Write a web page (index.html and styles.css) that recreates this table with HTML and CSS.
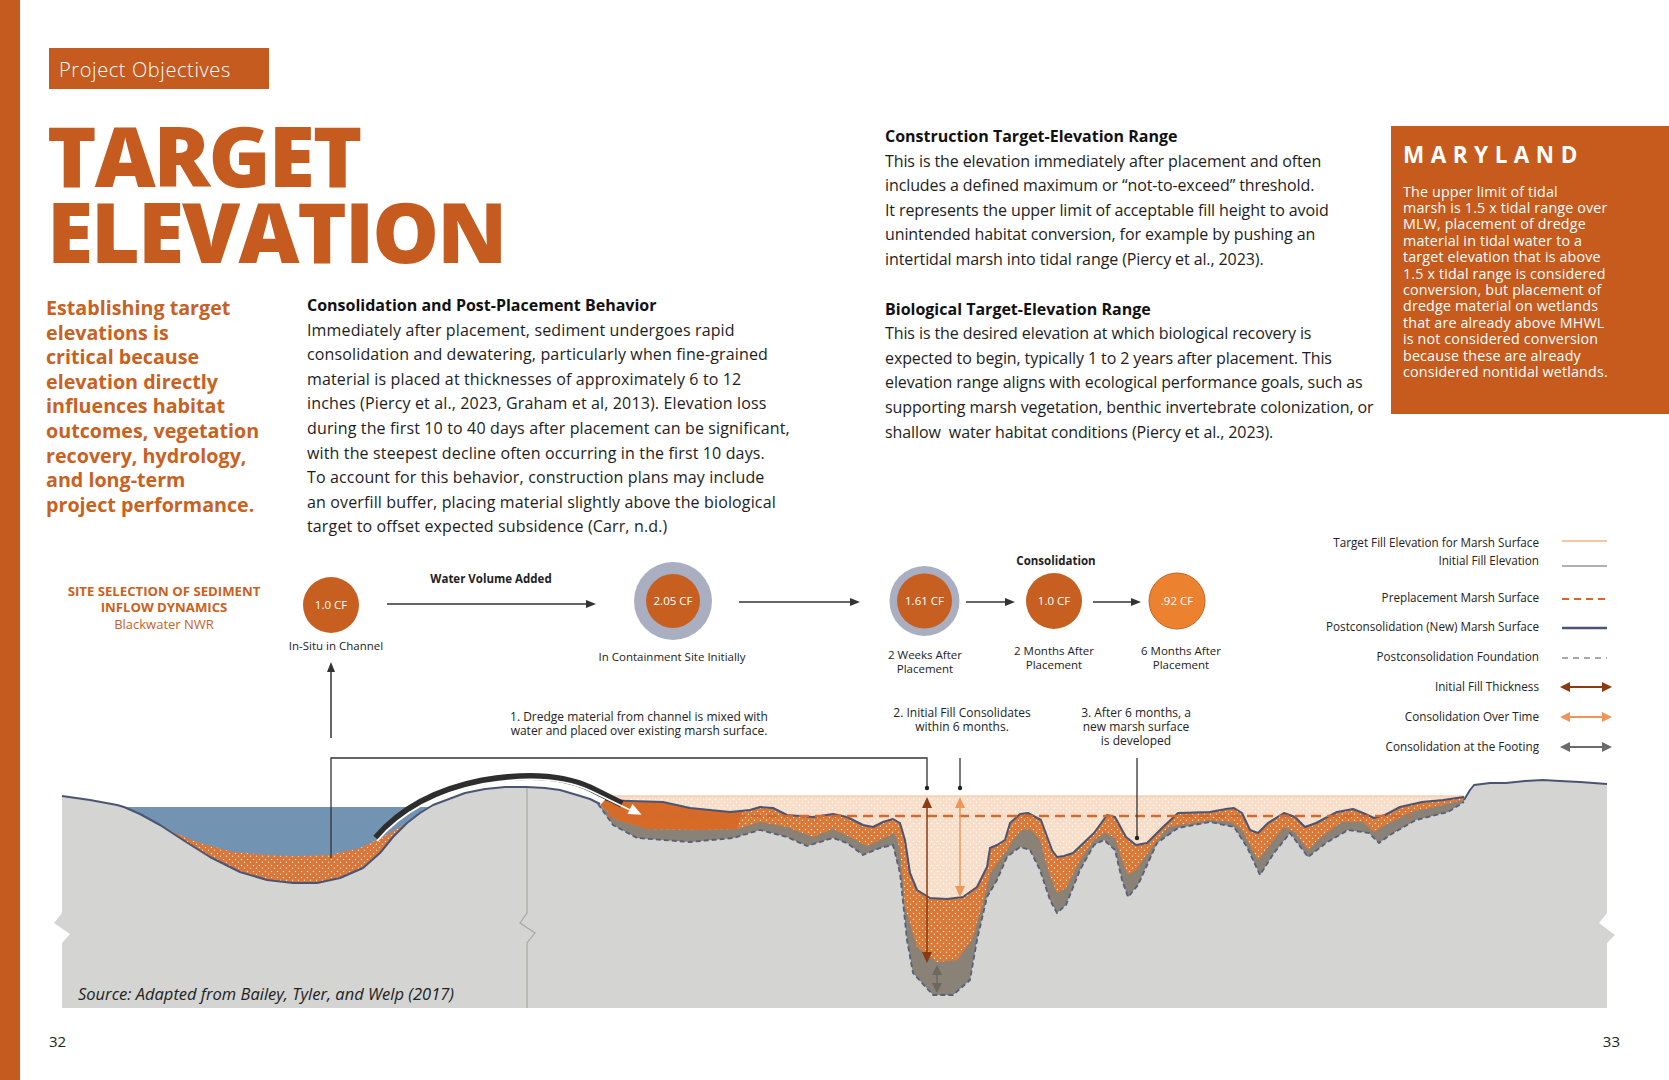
FILE: index.html
```html
<!DOCTYPE html>
<html lang="en">
<head>
<meta charset="utf-8">
<title>Target Elevation</title>
<link rel="stylesheet" href="styles.css">
</head>
<body>
<div class="page">
  <div class="bar"></div>
  <main class="main">
    <section class="top">
      <div class="col-left">
        <div class="tag">Project Objectives</div>
        <h1 class="title"><span class="title-line">TARGET</span><span class="title-line">ELEVATION</span></h1>
        <div class="lower">
          <p class="lead">Establishing target<br>elevations is<br>critical because<br>elevation directly<br>influences habitat<br>outcomes, vegetation<br>recovery, hydrology,<br>and long-term<br>project performance.</p>
          <div class="block">
            <h2 class="h">Consolidation and Post-Placement Behavior</h2>
            <p class="body body-left">Immediately after placement, sediment undergoes rapid<br>consolidation and dewatering, particularly when fine-grained<br>material is placed at thicknesses of approximately 6 to 12<br>inches (Piercy et al., 2023, Graham et al, 2013). Elevation loss<br>during the first 10 to 40 days after placement can be significant,<br>with the steepest decline often occurring in the first 10 days.<br>To account for this behavior, construction plans may include<br>an overfill buffer, placing material slightly above the biological<br>target to offset expected subsidence (Carr, n.d.)</p>
          </div>
        </div>
      </div>
      <div class="col-mid">
        <div class="block">
          <h2 class="h">Construction Target-Elevation Range</h2>
          <p class="body body-right">This is the elevation immediately after placement and often<br>includes a defined maximum or “not-to-exceed” threshold.<br>It represents the upper limit of acceptable fill height to avoid<br>unintended habitat conversion, for example by pushing an<br>intertidal marsh into tidal range (Piercy et al., 2023).</p>
        </div>
        <div class="block block-2">
          <h2 class="h">Biological Target-Elevation Range</h2>
          <p class="body body-right">This is the desired elevation at which biological recovery is<br>expected to begin, typically 1 to 2 years after placement. This<br>elevation range aligns with ecological performance goals, such as<br>supporting marsh vegetation, benthic invertebrate colonization, or<br>shallow&nbsp; water habitat conditions (Piercy et al., 2023).</p>
        </div>
      </div>
      <aside class="maryland">
        <h2 class="md-title">MARYLAND</h2>
        <p class="md-body">The upper limit of tidal<br>marsh is 1.5 x tidal range over<br>MLW, placement of dredge<br>material in tidal water to a<br>target elevation that is above<br>1.5 x tidal range is considered<br>conversion, but placement of<br>dredge material on wetlands<br>that are already above MHWL<br>is not considered conversion<br>because these are already<br>considered nontidal wetlands.</p>
      </aside>
    </section>

    <svg class="diagram" viewBox="20 520 1649 500" width="1649" height="500" xmlns="http://www.w3.org/2000/svg">
      <defs>
        <pattern id="dotsO" width="6" height="6" patternUnits="userSpaceOnUse">
          <rect width="6" height="6" fill="#DC7836"/>
          <circle cx="1.5" cy="1.5" r="0.75" fill="#fff" opacity="0.85"/>
          <circle cx="4.5" cy="4.3" r="0.7" fill="#fff" opacity="0.75"/>
        </pattern>
        <pattern id="dotsP" width="6" height="6" patternUnits="userSpaceOnUse">
          <rect width="6" height="6" fill="#F8DEC9"/>
          <circle cx="1.5" cy="1.5" r="0.8" fill="#fff" opacity="0.9"/>
          <circle cx="4.5" cy="4.3" r="0.7" fill="#fff" opacity="0.8"/>
        </pattern>
        <pattern id="dotsS" width="6" height="6" patternUnits="userSpaceOnUse">
          <rect width="6" height="6" fill="#D9773A"/>
          <circle cx="1.5" cy="1.5" r="0.75" fill="#fff" opacity="0.8"/>
          <circle cx="4.5" cy="4.3" r="0.7" fill="#fff" opacity="0.7"/>
        </pattern>
      </defs>

      <!-- site title -->
      <text class="t-site" x="164" y="596">SITE SELECTION OF SEDIMENT</text>
      <text class="t-site" x="164" y="612">INFLOW DYNAMICS</text>
      <text class="t-site-sub" x="164" y="629">Blackwater NWR</text>

      <!-- process circles -->
      <circle cx="331" cy="605" r="28" fill="#C65F1F"/>
      <text class="t-circ" x="331" y="609">1.0 CF</text>
      <text class="t-lbl" x="336" y="650">In-Situ in Channel</text>

      <text class="t-lbl t-bold" x="491" y="583">Water Volume Added</text>
      <line x1="387" y1="604" x2="590" y2="604" class="ln"/>
      <polygon points="596,604 586,600 586,608" fill="#333"/>

      <circle cx="673" cy="601" r="39" fill="#A9AEC1"/>
      <circle cx="673" cy="601" r="27" fill="#C65F1F"/>
      <text class="t-circ" x="673" y="605">2.05 CF</text>
      <text class="t-lbl" x="672" y="661">In Containment Site Initially</text>

      <line x1="739" y1="602" x2="854" y2="602" class="ln"/>
      <polygon points="860,602 850,598 850,606" fill="#333"/>

      <circle cx="924.5" cy="601" r="35" fill="#A9AEC1"/>
      <circle cx="924.5" cy="601" r="27.5" fill="#C65F1F"/>
      <text class="t-circ" x="924.5" y="605">1.61 CF</text>
      <text class="t-lbl" x="925" y="659">2 Weeks After</text>
      <text class="t-lbl" x="925" y="673">Placement</text>

      <line x1="966" y1="602" x2="1009" y2="602" class="ln"/>
      <polygon points="1015,602 1005,598 1005,606" fill="#333"/>

      <text class="t-lbl t-bold" x="1056" y="565">Consolidation</text>
      <circle cx="1054" cy="601" r="28" fill="#C65F1F"/>
      <text class="t-circ" x="1054" y="605">1.0 CF</text>
      <text class="t-lbl" x="1054" y="655">2 Months After</text>
      <text class="t-lbl" x="1054" y="669">Placement</text>

      <line x1="1093" y1="602" x2="1135" y2="602" class="ln"/>
      <polygon points="1141,602 1131,598 1131,606" fill="#333"/>

      <circle cx="1177" cy="601" r="28" fill="#EC8130" stroke="#C9631F" stroke-width="1"/>
      <text class="t-circ" x="1177" y="605">.92 CF</text>
      <text class="t-lbl" x="1181" y="655">6 Months After</text>
      <text class="t-lbl" x="1181" y="669">Placement</text>

      <!-- up arrow -->
      <line x1="331" y1="738" x2="331" y2="670" class="ln"/>
      <polygon points="331,662 327,672 335,672" fill="#333"/>

      <!-- notes -->
      <text class="t-lbl t-note" x="639" y="721">1. Dredge material from channel is mixed with</text>
      <text class="t-lbl t-note" x="639" y="735">water and placed over existing marsh surface.</text>
      <text class="t-lbl t-note" x="962" y="717">2. Initial Fill Consolidates</text>
      <text class="t-lbl t-note" x="962" y="731">within 6 months.</text>
      <text class="t-lbl t-note" x="1136" y="717">3. After 6 months, a</text>
      <text class="t-lbl t-note" x="1136" y="731">new marsh surface</text>
      <text class="t-lbl t-note" x="1136" y="745">is developed</text>

      <!-- legend -->
      <text class="t-leg" x="1539" y="547">Target Fill Elevation for Marsh Surface</text>
      <line x1="1562" y1="541" x2="1607" y2="541" stroke="#F6C6A2" stroke-width="2"/>
      <text class="t-leg" x="1539" y="565">Initial Fill Elevation</text>
      <line x1="1562" y1="566" x2="1607" y2="566" stroke="#5C6378" stroke-width="1"/>
      <text class="t-leg" x="1539" y="602">Preplacement Marsh Surface</text>
      <line x1="1562" y1="599" x2="1607" y2="599" stroke="#D2692A" stroke-width="2" stroke-dasharray="7 5"/>
      <text class="t-leg" x="1539" y="631">Postconsolidation (New) Marsh Surface</text>
      <line x1="1562" y1="628" x2="1607" y2="628" stroke="#4A5574" stroke-width="2.5"/>
      <text class="t-leg" x="1539" y="661">Postconsolidation Foundation</text>
      <line x1="1562" y1="658" x2="1607" y2="658" stroke="#555" stroke-width="1" stroke-dasharray="6 5"/>
      <text class="t-leg" x="1539" y="691">Initial Fill Thickness</text>
      <line x1="1568" y1="687" x2="1604" y2="687" stroke="#8B3A12" stroke-width="2"/>
      <polygon points="1560,687 1570,682 1570,692" fill="#8B3A12"/>
      <polygon points="1612,687 1602,682 1602,692" fill="#8B3A12"/>
      <text class="t-leg" x="1539" y="721">Consolidation Over Time</text>
      <line x1="1568" y1="717" x2="1604" y2="717" stroke="#F0955A" stroke-width="2"/>
      <polygon points="1560,717 1570,712 1570,722" fill="#F0955A"/>
      <polygon points="1612,717 1602,712 1602,722" fill="#F0955A"/>
      <text class="t-leg" x="1539" y="751">Consolidation at the Footing</text>
      <line x1="1568" y1="747" x2="1604" y2="747" stroke="#6B6B6B" stroke-width="2"/>
      <polygon points="1560,747 1570,742 1570,752" fill="#6B6B6B"/>
      <polygon points="1612,747 1602,742 1602,752" fill="#6B6B6B"/>

      <!-- water & channel sediment -->
      <rect x="110" y="807" width="330" height="95" fill="#7393B2"/>
      <path d="M158,824 L175,833 L200,843 L233,852 L267,855 L293,856 L330,855 L360,848 L383,837 L400,827 L417,818 L427,812 L440,806 L440,900 L158,900 Z" fill="url(#dotsS)"/>

      <!-- placement layers -->
      <rect x="610" y="796" width="856" height="205" fill="url(#dotsP)"/>
      <path d="M605,800 L630,801 L663,802 L690,808 L730,812 L750,810 L760,807 L773,808 L787,815 L813,817 L833,814 L847,817 L863,825 L873,827 L883,822 L893,819 L900,823 L905,840 L910,873 L917,890 L930,898 L947,899 L963,897 L977,887 L987,867 L990,848 L997,845 L1005,840 L1010,823 L1020,814 L1028,813 L1041,820 L1052,850 L1057,857 L1064,856 L1073,853 L1094,833 L1107,815 L1115,817 L1126,837 L1136,845 L1147,843 L1163,827 L1178,813 L1210,812 L1226,809 L1234,808 L1242,813 L1250,830 L1258,833 L1268,823 L1284,813 L1295,817 L1305,827 L1316,823 L1337,812 L1353,809 L1363,813 L1374,818 L1385,815 L1400,807 L1422,802 L1443,800 L1464,797 L1466,1004 L605,1004 Z" fill="url(#dotsO)"/>
      <path d="M605,800 L630,801 L663,802 L690,808 L730,812 L742,811 L737,829 L700,830 L647,829 L617,820 L600,805 Z" fill="#D76A27"/>
      <path d="M600,805 L617,820 L647,829 L700,830 L737,829 L760,822 L787,827 L813,837 L833,829 L850,837 L867,846 L880,840 L895,833 L900,850 L905,907 L917,947 L937,962 L957,960 L972,940 L982,907 L990,873 L1000,860 L1007,850 L1013,840 L1022,830 L1030,829 L1040,840 L1048,870 L1057,893 L1066,888 L1080,860 L1094,840 L1105,833 L1115,838 L1122,860 L1128,875 L1136,870 L1150,850 L1168,827 L1210,820 L1231,822 L1242,830 L1258,860 L1268,847 L1284,827 L1295,832 L1308,850 L1321,837 L1342,822 L1363,822 L1374,832 L1385,825 L1411,812 L1443,805 L1464,800 L1466,1006 L600,1006 Z" fill="#8A8276"/>

      <!-- ground -->
      <path class="ground" d="M62,796 L90,800 L117,805 L124,807 L140,814 L160,825 L183,840 L210,857 L240,872 L267,880 L293,883 L317,883 L340,878 L363,868 L380,853 L393,837 L407,823 L420,813 L433,805 L449,799 L465,793 L485,789 L505,787 L527,787 L545,788 L560,790 L577,795 L590,799 L598,804 L613,825 L637,838 L690,842 L733,838 L760,830 L787,837 L807,846 L833,838 L847,843 L863,855 L880,848 L893,845 L900,873 L907,940 L913,973 L933,995 L953,995 L970,980 L977,940 L987,897 L997,880 L1007,857 L1020,847 L1030,850 L1040,870 L1050,900 L1057,913 L1066,905 L1080,870 L1094,845 L1104,840 L1115,850 L1122,880 L1128,897 L1138,885 L1157,843 L1178,828 L1210,822 L1234,827 L1247,847 L1260,875 L1274,853 L1290,833 L1308,857 L1326,843 L1348,830 L1369,833 L1379,843 L1390,835 L1416,820 L1448,812 L1464,802 L1470,790 L1474,785 L1490,783 L1506,783 L1525,781 L1543,780 L1560,781 L1580,782 L1607,784 L1607,913 L1599,923 L1615,935 L1607,943 L1607,1008 L62,1008 L62,943 L70,934 L54,923 L62,913 Z"/>
      <polyline class="divider" points="527,787 527,913 520,923 535,933 527,943 527,1008"/>

      <!-- surface strokes -->
      <polyline class="s-line" points="62,796 90,800 117,805 124,807 140,814 160,825 183,840 210,857 240,872 267,880 293,883 317,883 340,878 363,868 380,853 393,837 407,823 420,813 433,805 449,799 465,793 485,789 505,787 527,787 545,788 560,790 577,795 590,799 600,804"/>
      <line x1="612" y1="796" x2="1464" y2="796" stroke="#F3BC95" stroke-width="1.2"/>
      <polyline class="s-line" points="605,800 630,801 663,802 690,808 730,812 750,810 760,807 773,808 787,815 813,817 833,814 847,817 863,825 873,827 883,822 893,819 900,823 905,840 910,873 917,890 930,898 947,899 963,897 977,887 987,867 990,848 997,845 1005,840 1010,823 1020,814 1028,813 1041,820 1052,850 1057,857 1064,856 1073,853 1094,833 1107,815 1115,817 1126,837 1136,845 1147,843 1163,827 1178,813 1210,812 1226,809 1234,808 1242,813 1250,830 1258,833 1268,823 1284,813 1295,817 1305,827 1316,823 1337,812 1353,809 1363,813 1374,818 1385,815 1400,807 1422,802 1443,800 1464,797"/>
      <polyline class="s-dash" points="598,804 613,825 637,838 690,842 733,838 760,830 787,837 807,846 833,838 847,843 863,855 880,848 893,845 900,873 907,940 913,973 933,995 953,995 970,980 977,940 987,897 997,880 1007,857 1020,847 1030,850 1040,870 1050,900 1057,913 1066,905 1080,870 1094,845 1104,840 1115,850 1122,880 1128,897 1138,885 1157,843 1178,828 1210,822 1234,827 1247,847 1260,875 1274,853 1290,833 1308,857 1326,843 1348,830 1369,833 1379,843 1390,835 1416,820 1448,812 1464,802"/>
      <polyline class="s-line" points="1464,800 1470,790 1474,785 1490,783 1506,783 1525,781 1543,780 1560,781 1580,782 1607,784"/>
      <line x1="607" y1="816" x2="1411" y2="816" stroke="#D06A2D" stroke-width="2.5" stroke-dasharray="10 6"/>

      <!-- pipe -->
      <path d="M376,838 C400,810 436,790 482,781 C522,774 560,774 590,788 L622,804" fill="none" stroke="#2E2E2E" stroke-width="7"/>
      <path d="M377,841 C401,813 437,793 483,784 C523,777 561,777 591,791 L630,810" fill="none" stroke="#fff" stroke-width="1.8"/>
      <polygon points="641.6,814.8 627.5,813.9 632.5,804.1" fill="#fff"/>

      <!-- leader lines -->
      <polyline class="ld" points="331,858 331,758 927,758 927,788"/>
      <line x1="960" y1="758" x2="960" y2="788" class="ld"/>
      <line x1="1137" y1="758" x2="1137" y2="838" class="ld"/>
      <circle cx="927" cy="788" r="2.2" fill="#222"/>
      <circle cx="960" cy="788" r="2.2" fill="#222"/>
      <circle cx="1137" cy="838" r="2.2" fill="#222"/>

      <!-- measurement arrows -->
      <line x1="927" y1="806" x2="927" y2="955" stroke="#8B3A12" stroke-width="1.5"/>
      <polygon points="927,797 922,808 932,808" fill="#8B3A12"/>
      <polygon points="927,963 922,952 932,952" fill="#8B3A12"/>
      <line x1="960" y1="806" x2="960" y2="888" stroke="#F0955A" stroke-width="1.5"/>
      <polygon points="960,797 955,808 965,808" fill="#F0955A"/>
      <polygon points="960,897 955,886 965,886" fill="#F0955A"/>
      <line x1="937" y1="972" x2="937" y2="986" stroke="#6E675D" stroke-width="1.5"/>
      <polygon points="937,965 932,975 942,975" fill="#6E675D"/>
      <polygon points="937,993 932,983 942,983" fill="#6E675D"/>

      <text class="t-src" x="78" y="1000">Source: Adapted from Bailey, Tyler, and Welp (2017)</text>
    </svg>

    <footer class="footer">
      <span class="pnum">32</span>
      <span class="pnum">33</span>
    </footer>
  </main>
</div>
</body>
</html>
```

FILE: styles.css
```css
* { box-sizing: border-box; }
html, body { margin: 0; padding: 0; }
body {
  width: 1669px;
  height: 1080px;
  overflow: hidden;
  background: #fff;
  font-family: "Open Sans", "Liberation Sans", sans-serif;
  color: #1d1d1d;
}
.page { display: flex; height: 1080px; }
.bar { width: 20px; flex: none; background: #C65B1F; }
.main { width: 1649px; flex: none; display: flex; flex-direction: column; }

.top {
  height: 520px;
  flex: none;
  display: grid;
  grid-template-columns: 839px 506px 278px;
  align-items: start;
  padding-left: 26px;
}
.tag {
  margin: 48px 0 0 3px;
  width: 220px;
  height: 41px;
  background: #C65B1F;
  color: #fff;
  font-size: 20px;
  font-weight: 300;
  letter-spacing: 0.6px;
  line-height: 38px;
  padding: 3px 0 0 10px;
  white-space: nowrap;
}
.title {
  margin: 28px 0 0 1px;
  font-size: 84px;
  line-height: 76px;
  font-weight: 800;
  letter-spacing: -2px;
  color: #C65B1F;
}
.title-line {
  display: block;
  height: 76px;
}
.lower {
  display: grid;
  grid-template-columns: 261px 1fr;
  margin-top: 24px;
}
.lead {
  margin: 0;
  padding-top: 3px;
  font-size: 19.7px;
  line-height: 24.6px;
  font-weight: 700;
  color: #C9611F;
  white-space: nowrap;
}
.h {
  margin: 0;
  font-size: 16px;
  line-height: 24.6px;
  font-weight: 700;
  color: #111;
  white-space: nowrap;
}
.body {
  margin: 0;
  font-size: 16px;
  line-height: 24.6px;
  white-space: nowrap;
}
.body-left { letter-spacing: 0.14px; }
.body-right { letter-spacing: -0.1px; }
.col-mid { padding-top: 124px; }
.block-2 { margin-top: 25px; }

.maryland {
  margin-top: 126px;
  height: 288px;
  background: #C75A1D;
  color: #fff;
  padding: 18px 10px 0 12px;
}
.md-title {
  margin: 0;
  font-size: 22.5px;
  line-height: 22.5px;
  font-weight: 700;
  letter-spacing: 6.5px;
}
.md-body {
  margin: 17px 0 0;
  font-size: 14.3px;
  line-height: 16.4px;
  letter-spacing: 0.15px;
  white-space: nowrap;
}

.diagram { display: block; flex: none; width: 1649px; height: 500px; }
.diagram text { font-family: "Open Sans", "Liberation Sans", sans-serif; }
.t-lbl { font-size: 11.5px; fill: #222; text-anchor: middle; }
.t-bold { font-weight: 700; }
.t-note { font-size: 12px; }
.t-circ { font-size: 11.5px; fill: #fff; text-anchor: middle; }
.t-site { font-size: 13.2px; font-weight: 700; fill: #C9611F; text-anchor: middle; }
.t-site-sub { font-size: 13px; fill: #C9611F; text-anchor: middle; }
.t-leg { font-size: 11.7px; fill: #222; text-anchor: end; }
.t-src { font-size: 16.5px; font-style: italic; fill: #222; }

.ln { stroke: #333; stroke-width: 1.5; }
.ld { stroke: #333; stroke-width: 1.3; fill: none; }
.ground { fill: #D4D4D2; }
.divider { fill: none; stroke: #A9A9A2; stroke-width: 1.2; }
.s-line { fill: none; stroke: #4A5574; stroke-width: 2; stroke-linejoin: round; }
.s-dash { fill: none; stroke: #55607A; stroke-width: 1.8; stroke-dasharray: 5 3; stroke-linejoin: round; }

.footer {
  height: 60px;
  flex: none;
  display: flex;
  justify-content: space-between;
  padding: 11px 49px 0 29px;
  font-size: 15px;
  line-height: 20px;
  color: #222;
}
```
